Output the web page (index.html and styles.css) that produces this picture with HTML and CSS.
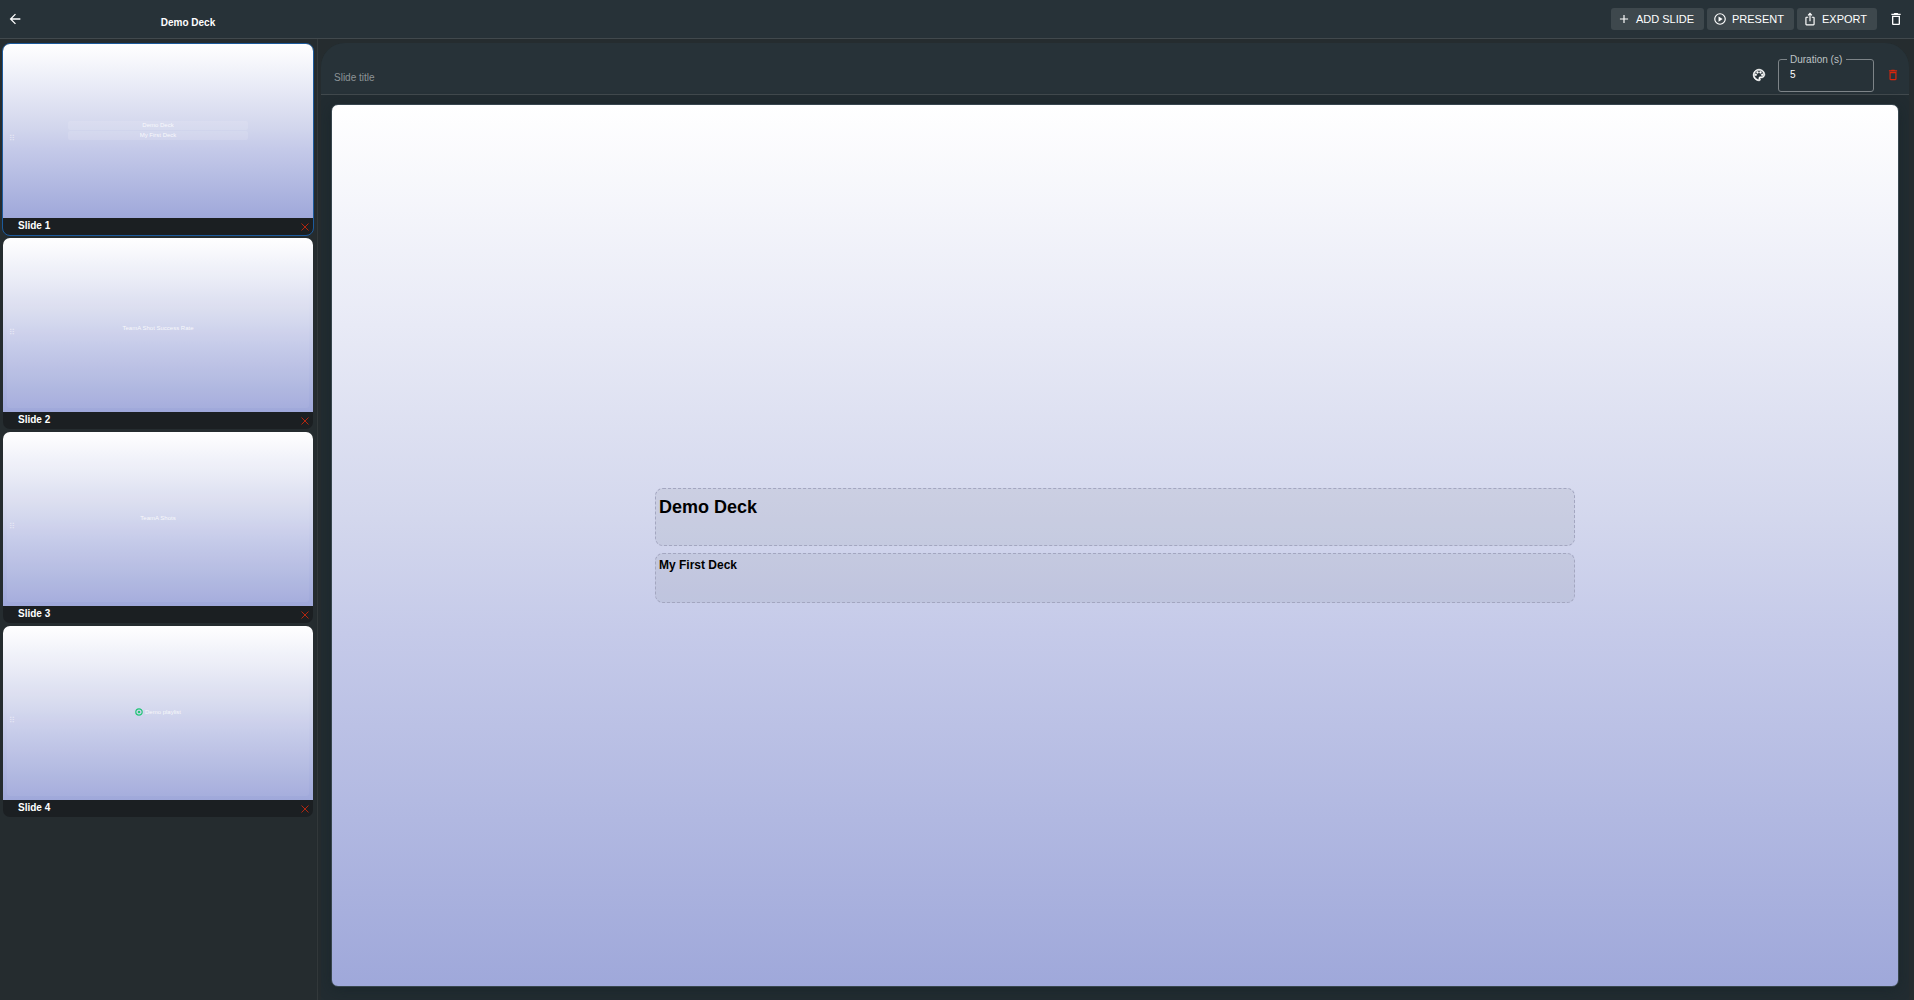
FILE: index.html
```
<!DOCTYPE html>
<html lang="en">
<head>
    <meta charset="UTF-8">
    <meta name="viewport" content="width=device-width, initial-scale=1.0">
    <title>Demo Deck</title>
    <link rel="stylesheet" href="styles.css">
</head>
<body>
    <header class="topbar">
        <button class="icon-btn" aria-label="Back">
            <svg viewBox="0 0 24 24"><path d="M20 11H7.800l5.600-5.600L12 4l-8 8 8 8 1.400-1.400L7.800 13H20z"/></svg>
        </button>
        <h1 class="deck-title">Demo Deck</h1>
        <div class="actions">
            <button class="btn">
                <svg viewBox="0 0 24 24"><path d="M19 13h-6v6h-2v-6H5v-2h6V5h2v6h6z"/></svg>
                ADD SLIDE
            </button>
            <button class="btn">
                <svg viewBox="0 0 24 24"><path d="M12 2a10 10 0 1 0 0 20 10 10 0 0 0 0-20zm0 18a8 8 0 1 1 0-16 8 8 0 0 1 0 16zM9.500 16.500l7-4.500-7-4.500z"/></svg>
                PRESENT
            </button>
            <button class="btn">
                <svg viewBox="0 0 24 24"><path d="M16 5l-1.420 1.420-1.590-1.590V16h-1.980V4.830L9.420 6.420 8 5l4-4zm4 5v11a2 2 0 0 1-2 2H6a2 2 0 0 1-2-2V10c0-1.110.89-2 2-2h3v2H6v11h12V10h-3V8h3a2 2 0 0 1 2 2z"/></svg>
                EXPORT
            </button>
        </div>
        <button class="icon-btn" aria-label="Delete deck">
            <svg viewBox="0 0 24 24"><path d="M6 19c0 1.100.9 2 2 2h8c1.100 0 2-.9 2-2V7H6zM8 9h8v10H8zm7.500-5-1-1h-5l-1 1H5v2h14V4z"/></svg>
        </button>
    </header>

    <div class="workspace">
        <aside class="slides">
            <article class="slide active">
                <div class="thumb">
                    <span class="drag">⠿</span>
                    <div class="mini-box">Demo Deck</div>
                    <div class="mini-box">My First Deck</div>
                </div>
                <footer class="slide-footer">
                    <span>Slide 1</span>
                    <button class="remove" aria-label="Remove slide 1"><svg viewBox="0 0 8 8"><path d="M.5.5l7 7M7.500.5l-7 7"/></svg></button>
                </footer>
            </article>
            <article class="slide">
                <div class="thumb framed">
                    <span class="drag">⠿</span>
                    <div class="mini-text chart-title">TeamA Shot Success Rate</div>
                </div>
                <footer class="slide-footer">
                    <span>Slide 2</span>
                    <button class="remove" aria-label="Remove slide 2"><svg viewBox="0 0 8 8"><path d="M.5.5l7 7M7.500.5l-7 7"/></svg></button>
                </footer>
            </article>
            <article class="slide">
                <div class="thumb framed">
                    <span class="drag">⠿</span>
                    <div class="mini-text">TeamA Shots</div>
                </div>
                <footer class="slide-footer">
                    <span>Slide 3</span>
                    <button class="remove" aria-label="Remove slide 3"><svg viewBox="0 0 8 8"><path d="M.5.5l7 7M7.500.5l-7 7"/></svg></button>
                </footer>
            </article>
            <article class="slide">
                <div class="thumb framed">
                    <span class="drag">⠿</span>
                    <div class="mini-text">
                        <svg class="disc" viewBox="0 0 8 8"><circle class="ring" cx="4" cy="4" r="3.200"/><circle class="dot" cx="4" cy="4" r="1.300"/></svg>
                        Demo playlist
                    </div>
                </div>
                <footer class="slide-footer">
                    <span>Slide 4</span>
                    <button class="remove" aria-label="Remove slide 4"><svg viewBox="0 0 8 8"><path d="M.5.5l7 7M7.500.5l-7 7"/></svg></button>
                </footer>
            </article>
        </aside>

        <main class="editor">
            <div class="editor-bar">
                <input class="title-input" type="text" placeholder="Slide title" aria-label="Slide title">
                <button class="icon-btn palette" aria-label="Background">
                    <svg viewBox="0 0 24 24"><path d="M12 22C6.490 22 2 17.510 2 12S6.490 2 12 2s10 4.040 10 9c0 3.310-2.690 6-6 6h-1.770c-.28 0-.5.220-.5.500 0 .12.050.23.130.33.410.47.640 1.060.640 1.670A2.500 2.500 0 0 1 12 22zm0-18c-4.410 0-8 3.590-8 8s3.590 8 8 8c.28 0 .5-.22.500-.5a.54.54 0 0 0-.14-.35c-.41-.46-.63-1.050-.63-1.650a2.500 2.500 0 0 1 2.500-2.500H16c2.210 0 4-1.790 4-4 0-3.860-3.590-7-8-7z"/><circle cx="6.500" cy="11.500" r="1.500"/><circle cx="9.500" cy="7.500" r="1.500"/><circle cx="14.500" cy="7.500" r="1.500"/><circle cx="17.500" cy="11.500" r="1.500"/></svg>
                </button>
                <fieldset class="duration">
                    <legend><label for="duration">Duration (s)</label></legend>
                    <input id="duration" type="text" inputmode="numeric" value="5">
                </fieldset>
                <button class="icon-btn danger" aria-label="Delete slide">
                    <svg viewBox="0 0 24 24"><path d="M6 19c0 1.100.9 2 2 2h8c1.100 0 2-.9 2-2V7H6zM8 9h8v10H8zm7.500-5-1-1h-5l-1 1H5v2h14V4z"/></svg>
                </button>
            </div>
            <section class="canvas">
                <div class="block heading"><h2>Demo Deck</h2></div>
                <div class="block subheading"><h3>My First Deck</h3></div>
            </section>
        </main>
    </div>
</body>
</html>
```
FILE: styles.css
```
* {
    box-sizing: border-box;
}
body {
    margin: 0;
    height: 100vh;
    display: flex;
    flex-direction: column;
    background-color: #252c2f;
    color: #fff;
    font-family: "Liberation Sans", Arial, sans-serif;
}
h1, h2, h3 {
    margin: 0;
}
button {
    border: 0;
    padding: 0;
    background: none;
    color: inherit;
    font-family: inherit;
}
svg {
    display: block;
    fill: currentColor;
}

/* top bar */
.topbar {
    height: 39px;
    flex: none;
    display: flex;
    align-items: center;
    padding: 0 10px 0 7px;
    background-color: #273238;
    border-bottom: 1px solid #41494d;
}
.icon-btn {
    width: 16px;
    height: 16px;
    flex: none;
}
.icon-btn svg {
    width: 14px;
    height: 14px;
    margin: 0 auto;
}
.topbar .icon-btn svg {
    width: 16px;
    height: 16px;
}
.deck-title {
    width: 330px;
    padding-top: 6px;
    text-align: center;
    font-size: 10px;
}
.actions {
    display: flex;
    gap: 3px;
    margin-left: auto;
    margin-right: 11px;
}
.btn {
    height: 22px;
    display: flex;
    align-items: center;
    gap: 5px;
    padding: 0 10px 0 6px;
    border-radius: 3px;
    background-color: #3e484d;
    font-size: 11px;
}
.btn svg {
    width: 14px;
    height: 14px;
}

/* slide list */
.workspace {
    flex: 1;
    min-height: 0;
    display: flex;
}
.slides {
    width: 318px;
    flex: none;
    display: flex;
    flex-direction: column;
    gap: 1px;
    padding: 4px 3px 0 2px;
    border-right: 1px solid #33393b;
}
.slide {
    overflow: hidden;
    border: 1px solid transparent;
    border-radius: 8px;
    background: #1b1f22 padding-box;
}
.slide.active {
    border-color: #1c5a9c;
}
.thumb {
    position: relative;
    height: 174px;
    display: flex;
    flex-direction: column;
    align-items: center;
    justify-content: center;
    gap: 1px;
    padding-bottom: 2px;
    background: linear-gradient(#fff, #e8eaf6 25%, #d3d7ed 47%, #c5cae9 60%, #9fa8da);
    color: rgba(255, 255, 255, 0.85);
    font-size: 6px;
    line-height: 9px;
}
.framed::before {
    content: "";
    position: absolute;
    inset: 4px;
    border-radius: 3px;
    background-color: rgba(255, 255, 255, 0.06);
}
.mini-box {
    width: 180px;
    border-radius: 2px;
    background-color: rgba(255, 255, 255, 0.12);
    text-align: center;
}
.mini-text {
    display: flex;
    align-items: center;
    gap: 2px;
}
.chart-title {
    padding-top: 8px;
}
.drag {
    position: absolute;
    left: 6px;
    top: 52%;
    font-family: "DejaVu Sans", sans-serif;
    font-size: 8px;
    color: rgba(255, 255, 255, 0.5);
}
.disc {
    position: relative;
    width: 8px;
    height: 8px;
}
.ring {
    fill: none;
    stroke: #22c578;
    stroke-width: 1.2;
}
.dot {
    fill: #22c578;
}
.slide-footer {
    height: 17px;
    display: flex;
    justify-content: space-between;
    padding: 2px 4px 0 15px;
    font-size: 10px;
    line-height: 12px;
    font-weight: bold;
}
.remove {
    width: 8px;
    height: 8px;
    margin-top: 3px;
}
.remove path {
    stroke: #b3260f;
}

/* editor */
.editor {
    flex: 1;
    display: flex;
    flex-direction: column;
    margin: 4px 5px 0 3px;
    border-radius: 24px 24px 0 0;
    background-color: #222c31;
}
.editor-bar {
    height: 52px;
    flex: none;
    display: flex;
    align-items: center;
    padding: 0 8px 0 13px;
    border-radius: 24px 24px 0 0;
    background-color: #273238;
    border-bottom: 1px solid #41494d;
}
.title-input {
    flex: 1;
    padding: 18px 0 0;
    border: 0;
    outline: 0;
    background: none;
    color: #fff;
    font-family: inherit;
    font-size: 10px;
}
.title-input::placeholder {
    color: #8d9497;
}
.editor-bar .icon-btn {
    margin-top: 12px;
}
.palette svg {
    stroke: currentColor;
    stroke-width: 1;
}
.duration {
    width: 96px;
    height: 38px;
    margin: 8px 11px 0;
    padding: 0 11px;
    border: 1px solid #7d8488;
    border-radius: 3px;
}
.duration legend {
    padding: 0 4px 0 3px;
    margin-left: -3px;
    font-size: 10px;
    line-height: 12px;
    color: #bec2c4;
}
.duration input {
    display: block;
    width: 100%;
    padding: 3px 0 0;
    border: 0;
    outline: 0;
    background: none;
    color: #fff;
    font-family: inherit;
    font-size: 10px;
}
.danger {
    color: #d9260d;
}
.canvas {
    flex: 1;
    display: flex;
    flex-direction: column;
    align-items: center;
    justify-content: center;
    gap: 7px;
    margin: 9px 10px 13px;
    border: 1px solid #38464e;
    border-radius: 7px;
    background: linear-gradient(#fff, #e8eaf6 25%, #d3d7ed 47%, #c5cae9 60%, #9fa8da);
    box-shadow: 0 3px 14px rgba(15, 30, 36, 0.4);
    color: #000;
}
.block {
    width: 100%;
    max-width: 920px;
    padding: 0 3px;
    border: 1px dashed #a3a6c0;
    border-radius: 8px;
    background-color: rgba(120, 130, 140, 0.12);
}
.heading {
    height: 58px;
    padding-top: 7px;
}
.subheading {
    height: 50px;
    padding-top: 4px;
}
.block h2 {
    font-size: 18px;
    line-height: 22px;
}
.block h3 {
    font-size: 12px;
    line-height: 14px;
}
```
